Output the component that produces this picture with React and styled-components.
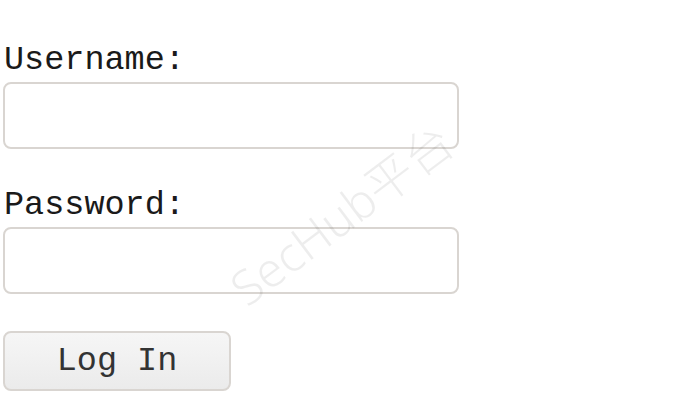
import styled, { createGlobalStyle } from "styled-components";

const GlobalStyle = createGlobalStyle`
    html, body {
        margin: 0;
        padding: 0;
        background: #ffffff;
    }
    body {
        font-family: "Liberation Mono", "DejaVu Sans Mono", monospace;
    }
`;

export default function App() {
    return (
        <>
            <GlobalStyle />
            <Page>
                <LoginForm onSubmit={(e) => e.preventDefault()}>
                    <Label htmlFor="username">Username:</Label>
                    <Field id="username" type="text" />
                    <Label htmlFor="password" className="second">Password:</Label>
                    <Field id="password" type="password" />
                    <Button type="submit">Log In</Button>
                </LoginForm>
                <Watermark>SecHub平台</Watermark>
            </Page>
        </>
    );
}

const Page = styled.div`
    position: relative;
    width: 681px;
    height: 420px;
    overflow: hidden;
`;

const LoginForm = styled.form`
    display: flex;
    flex-direction: column;
    align-items: flex-start;
    padding: 41px 0 0 3px;
`;

const Label = styled.label`
    font-size: 33.5px;
    line-height: 38px;
    color: #1a1a1a;
    margin-left: 1px;
    margin-bottom: 3px;

    &.second {
        margin-top: 37px;
    }
`;

const Field = styled.input`
    box-sizing: border-box;
    width: 456px;
    height: 67px;
    border: 2px solid #d9d5d1;
    border-radius: 8px;
    background: #ffffff;
    outline: none;
    font-family: inherit;
    font-size: 28px;
    padding: 0 10px;
`;

const Button = styled.button`
    box-sizing: border-box;
    margin-top: 37px;
    width: 228px;
    height: 60px;
    border: 2px solid #d9d5d1;
    border-radius: 8px;
    background: linear-gradient(#f6f6f6, #ebebeb);
    font-family: "Liberation Mono", "DejaVu Sans Mono", monospace;
    font-size: 33.5px;
    color: #333333;
    cursor: pointer;
`;

const Watermark = styled.div`
    position: absolute;
    left: 340px;
    top: 212px;
    transform: translate(-50%, -50%) rotate(-37deg);
    font-family: "Noto Sans", "Noto Sans CJK SC", sans-serif;
    font-weight: 300;
    font-size: 48px;
    color: rgba(0, 0, 0, 0.07);
    white-space: nowrap;
    pointer-events: none;
`;
